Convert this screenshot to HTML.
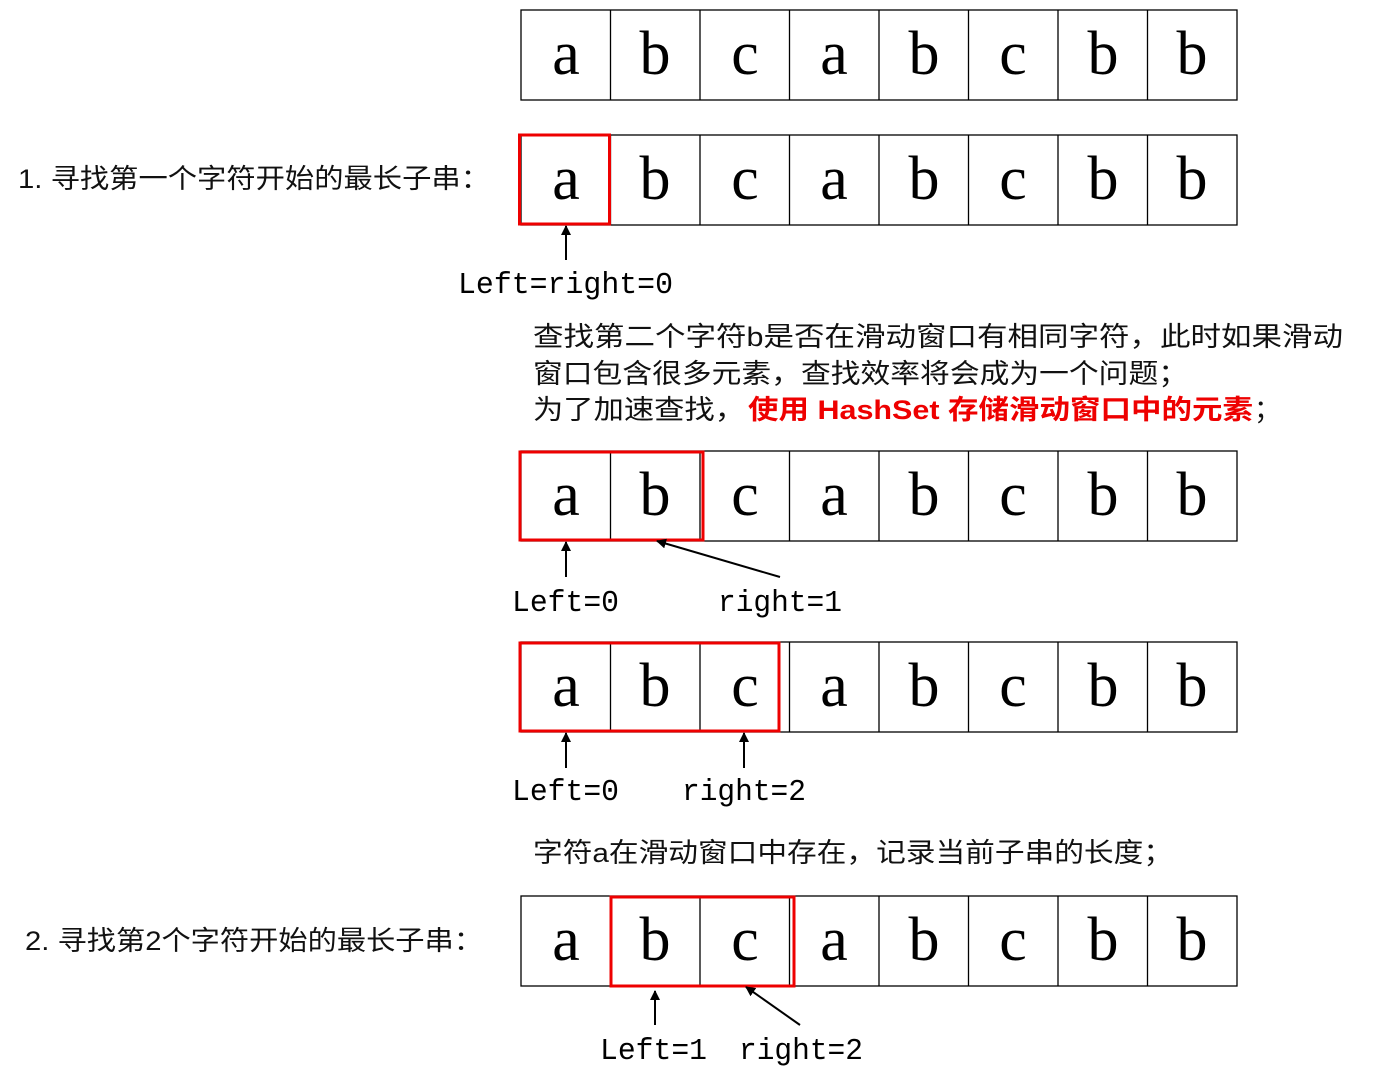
<!DOCTYPE html>
<html><head><meta charset="utf-8"><style>
html,body{margin:0;padding:0;background:#fff;width:1375px;height:1074px;overflow:hidden}
svg{display:block}
.L{font-family:"Liberation Serif",serif;font-size:62px;fill:#000;text-anchor:middle}
.M{font-family:"Liberation Mono","Liberation Serif",monospace;font-size:31px;fill:#000}
.C{font-family:"Liberation Sans","Noto Sans CJK SC",sans-serif;font-size:27px;fill:#111}
</style></head><body>
<svg width="1375" height="1074" viewBox="0 0 1375 1074">
<defs>
<marker id="ah" viewBox="0 0 10 10" refX="9" refY="5" markerWidth="5" markerHeight="5" orient="auto"><path d="M0,0L10,5L0,10z" fill="#000"/></marker>
<g id="grid" fill="none" stroke="#000" stroke-width="1.3">
<rect x="0" y="0" width="716" height="90"/>
<path d="M89.5,0V90M179,0V90M268.5,0V90M358,0V90M447.5,0V90M537,0V90M626.5,0V90"/>
</g>
</defs>
<use href="#grid" x="521" y="10"/>
<use href="#grid" x="521" y="135"/>
<use href="#grid" x="521" y="451"/>
<use href="#grid" x="521" y="642"/>
<use href="#grid" x="521" y="896"/>

<g class="L">
<text x="566" y="74">a</text><text x="655" y="74">b</text><text x="745" y="74">c</text><text x="834" y="74">a</text><text x="924" y="74">b</text><text x="1013" y="74">c</text><text x="1103" y="74">b</text><text x="1192" y="74">b</text>
<text x="566" y="199">a</text><text x="655" y="199">b</text><text x="745" y="199">c</text><text x="834" y="199">a</text><text x="924" y="199">b</text><text x="1013" y="199">c</text><text x="1103" y="199">b</text><text x="1192" y="199">b</text>
<text x="566" y="515">a</text><text x="655" y="515">b</text><text x="745" y="515">c</text><text x="834" y="515">a</text><text x="924" y="515">b</text><text x="1013" y="515">c</text><text x="1103" y="515">b</text><text x="1192" y="515">b</text>
<text x="566" y="706">a</text><text x="655" y="706">b</text><text x="745" y="706">c</text><text x="834" y="706">a</text><text x="924" y="706">b</text><text x="1013" y="706">c</text><text x="1103" y="706">b</text><text x="1192" y="706">b</text>
<text x="566" y="960">a</text><text x="655" y="960">b</text><text x="745" y="960">c</text><text x="834" y="960">a</text><text x="924" y="960">b</text><text x="1013" y="960">c</text><text x="1103" y="960">b</text><text x="1192" y="960">b</text>
</g>

<g fill="none" stroke="#e00" stroke-width="3">
<rect x="519.5" y="135" width="90" height="89"/>
<rect x="520" y="452" width="183" height="88"/>
<rect x="520" y="643" width="259" height="88"/>
<rect x="611" y="897" width="183" height="89"/>
</g>
<g stroke="#000" stroke-width="2" marker-end="url(#ah)">
<line x1="566" y1="260" x2="566" y2="226"/>
<line x1="566" y1="577" x2="566" y2="542"/>
<line x1="780" y1="577" x2="657" y2="541"/>
<line x1="566" y1="768" x2="566" y2="733"/>
<line x1="744" y1="768" x2="744" y2="733"/>
<line x1="655" y1="1025" x2="655" y2="991"/>
<line x1="800" y1="1025" x2="746" y2="987"/>
</g>
<text class="M" x="458" y="293" textLength="215" lengthAdjust="spacingAndGlyphs">Left=right=0</text>
<text class="M" x="512" y="611" textLength="107" lengthAdjust="spacingAndGlyphs">Left=0</text>
<text class="M" x="718" y="611" textLength="124" lengthAdjust="spacingAndGlyphs">right=1</text>
<text class="M" x="512" y="800" textLength="107" lengthAdjust="spacingAndGlyphs">Left=0</text>
<text class="M" x="682" y="800" textLength="124" lengthAdjust="spacingAndGlyphs">right=2</text>
<text class="M" x="600" y="1059" textLength="107" lengthAdjust="spacingAndGlyphs">Left=1</text>
<text class="M" x="739" y="1059" textLength="124" lengthAdjust="spacingAndGlyphs">right=2</text>
<text class="C" x="18" y="188" textLength="472" lengthAdjust="spacingAndGlyphs">1. 寻找第一个字符开始的最长子串：</text>
<text class="C" x="25" y="950" textLength="458" lengthAdjust="spacingAndGlyphs">2. 寻找第2个字符开始的最长子串：</text>
<text class="C" x="533" y="346" textLength="810" lengthAdjust="spacingAndGlyphs">查找第二个字符b是否在滑动窗口有相同字符，此时如果滑动</text>
<text class="C" x="533" y="383" textLength="655" lengthAdjust="spacingAndGlyphs">窗口包含很多元素，查找效率将会成为一个问题；</text>
<text class="C" x="533" y="419" textLength="212" lengthAdjust="spacingAndGlyphs">为了加速查找，</text>
<text class="C" x="748" y="419" textLength="505" lengthAdjust="spacingAndGlyphs" style="fill:#e00;font-weight:bold">使用 HashSet 存储滑动窗口中的元素</text>
<text class="C" x="1254" y="419">；</text>
<text class="C" x="533" y="862" textLength="640" lengthAdjust="spacingAndGlyphs">字符a在滑动窗口中存在，记录当前子串的长度；</text>
</svg>
</body></html>
